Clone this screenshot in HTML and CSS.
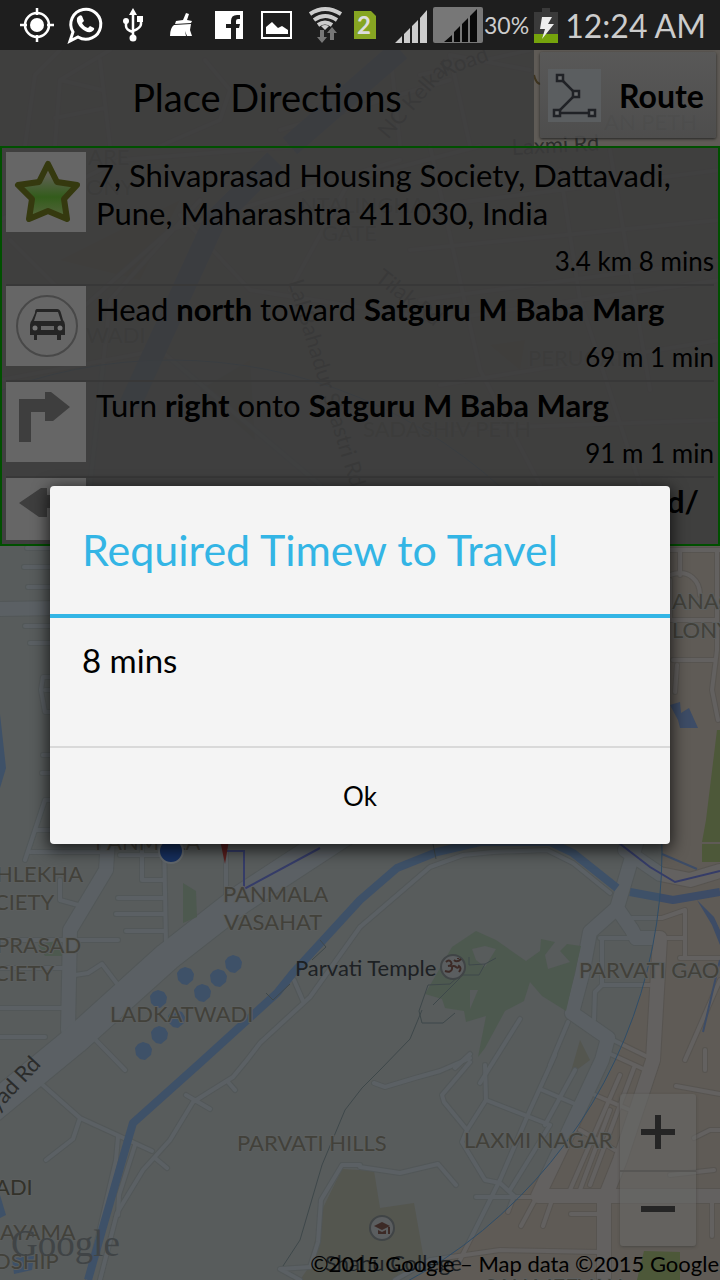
FILE: index.html
```html
<!DOCTYPE html>
<html lang="en">
<head>
<meta charset="utf-8">
<meta name="viewport" content="width=device-width, initial-scale=1">
<title>Place Directions</title>
<link rel="stylesheet" href="styles.css">
</head>
<body>
<div class="screen">
  <svg class="map" viewBox="0 0 720 1280" preserveAspectRatio="xMidYMid slice" aria-hidden="true">
    <defs>
      <g id="wide">
        <path d="M-20 1118L75 1040 167 957 240 900 350 828"/>
      </g>
      <g id="main">
        <path d="M640 830L617 908 590 932 582 975 572 1013 608 1038 602 1060 560 1150 538 1196H720M617 908L632 930 636 938H660L653 1060 620 1160 604 1200V1280M625 850L660 874 690 880 720 871M0 609L60 608"/>
        <path d="M70 930L68 1030M108 840L106 870 70 930"/>
      </g>
      <g id="minor">
        <path d="M360 927L430 867 463 855 493 852 547 850 573 863 610 893M360 927L310 997 260 1043 247 1060 233 1077 193 1102 170 1140 143 1170 117 1213 100 1280M186 1095L210 1109M228 1082L235 1090M155 1158L167 1168M294 980L303 1001"/>
        <path d="M0 940H118M0 968H68M0 1008H64M0 1037H45M75 975L88 973 102 964 118 985M60 880V900L78 905M142 840V880H164M120 855H164M118 898H164M116 914H164M126 931H164M164 840L166 945M226 850V895M30 852H108M25 860L45 800H60M35 830H60"/>
        <path d="M36 1079L80 1118 152 1151M80 1118L73 1139 46 1160M118 1137L116 1160 88 1280M135 1145L119 1195 118 1215M88 1032L125 1070"/>
        <path d="M27 548H60M24 567H60M28 587H60M25 626H60M30 643H60M60 677H43L41 690 45 712H60M43 755H60M42 773H60M45 690H60"/>
        <path d="M374 1083L385 1087 415 1078 440 1071 470 1058M555 1055L530 1110 500 1180 460 1260M485 1065L486 1100 550 1125M486 1100L467 1130 444 1102 442 1095 470 1062M467 1130L462 1142 485 1180 500 1183 514 1196M540 1089L575 1104M550 1125L510 1190M575 1070L545 1125M476 1197H535M360 1167L400 1173 438 1164 456 1185M514 1196L508 1212M535 1200L521 1226M552 1200L543 1226M571 1214H600"/>
        <path d="M602 940V985H650M600 938H632M632 918H662L685 910V958M665 938H685M602 985L595 992 594 1020M520 1019L480 1083M470 1054L455 1068M568 1022L550 1065M613 1040L650 1058M606 1052L650 1072M635 1065L590 1185M620 1075L570 1190M595 1095L630 1110M580 1130L615 1150M610 1110L580 1190M705 1070V1050M676 1086L720 1094M720 980L685 1060M670 1175L714 1170M712 1200V1236M680 958H720M694 1138L710 1130H720M395 1280L430 1260 500 1250 600 1252M300 1280L280 1269 310 1267"/>
        <path d="M670 550H720M717 550V650L712 690 718 720M680 550V575M670 575C690 568 700 582 700 595M673 660H715M677 665L675 692M670 580V620H715"/>
        <path d="M310 1267L318 1242 321 1200 342 1165H360"/>
        <path d="M25 146L35 75 60 50M55 146L60 80 110 50M110 146L100 60M60 80L102 90M55 118L105 108M160 146L220 120 230 90 205 60M400 146L390 50M470 146L450 55 530 70M280 130L450 80M420 75L530 50"/>
        <path d="M0 220L120 160 300 146M10 240L80 310 170 230 400 160M180 215L250 290 440 320 720 280M290 290L350 180 480 146M430 146L480 370 540 485M560 170L580 300 640 485M610 150L650 390M400 210L720 170M410 250L720 220M420 300L720 260M440 385L720 340M430 430L720 420M0 380L160 350 320 485M90 485L110 300 200 200"/>
      </g>
    </defs>
    <rect class="land" width="720" height="1280"/>
    <path class="estate" d="M309 1267L322 1210 342 1169 374 1171 380 1208 414 1203 424 1260 400 1280H300ZM60 260L180 200 140 280ZM200 390L250 360 255 440ZM490 345L525 340 520 370ZM580 1040L590 1060 570 1075Z"/>
    <g class="edge"><use class="w-minor" href="#minor"/><use class="w-main" href="#main"/><use class="w-wide" href="#wide"/></g>
    <g class="road"><use class="w-minor" href="#minor"/><use class="w-main" href="#main"/><use class="w-wide" href="#wide"/></g>
    <path class="park" d="M425 994L452 947 476 931 496 940 526 961 540 951 541 939 555 942 545 955 548 969 570 962 560 951 567 944 581 946 566 1011 542 996 530 982 524 1001 505 1011 485 1048 478 1057 486 1016 466 1022 464 1011 445 1008 442 999ZM183 883L196 891 197 917 183 923ZM38 945L60 940 62 956H45Z"/>
    <path class="land" d="M472 949L485 946 496 949 485 967 476 960ZM470 990L478 990 470 1009Z"/>
    <path class="lawn" d="M702 844H720V862L702 862ZM644 1251L680 1252V1280H637ZM717 730H720V842H702L706 820Z"/>
    <path class="river" d="M88 1280L103 1227 128 1140 133 1123 200 1063 277 993 293 973 360 900 397 868 437 852 480 842H550L573 853 617 888M630 892L673 900 720 892"/>
    <path class="river-wide" d="M130 405L215 220 275 160"/>
    <path class="river-wide" d="M290 146L400 50"/>
    <path class="water" d="M0 714L6 768 0 788ZM670 705L680 702 681 713 689 708 698 728 680 728 678 720ZM697 900L714 917 720 930V945L712 925ZM0 1195L6 1215 0 1218ZM12 1258L34 1256 32 1270 14 1274Z"/>
    <g class="water">
      <path id="pool" d="M185 967L191 969 194 974 193 980 187 985 182 984 178 980 177 973 180 969Z"/>
      <use href="#pool" x="33" y="2"/><use href="#pool" x="48" y="-12"/><use href="#pool" x="17" y="17"/><use href="#pool" x="-27" y="23"/><use href="#pool" x="-9" y="43"/><use href="#pool" x="-26" y="59"/><use href="#pool" x="-42" y="75"/>
    </g>
    <path class="trail" d="M469 957V965L485 964 496 958M485 964L479 975H460L450 984 428 985 419 1011 422 1023H443L455 1013M422 1010L410 1039 380 1070 362 1088 345 1110 322 1165 300 1240 283 1266M460 978L433 1005M266 993L273 1000 290 984M320 940L326 947 312 960M433 844L436 859"/>
    <path class="stream" d="M662 854L697 869M720 960L703 1032"/>
    <circle class="range" cx="171" cy="851" r="491"/>
    <path class="route" d="M227 851H244V889L320 848M615 840L650 867 675 882 720 871"/>
    <path class="brown" d="M534 75Q536 84 541 84"/>
    <g class="place">
      <text x="88" y="165">ARE</text><text x="86" y="195">ONY</text><text x="86" y="343">WADI</text>
      <text x="300" y="213">NTALINGHA</text><text x="322" y="241">GATE</text><text x="528" y="366">PERUGATE</text><text x="363" y="437">SADASHIV PETH</text>
      <text x="604" y="130">AN PETH</text>
      <text x="672" y="609">ANAG</text><text x="672" y="638">LONY</text>
      <text x="95" y="850">PANMALA</text>
      <text x="-4" y="882">HLEKHA</text><text x="-6" y="910">CIETY</text>
      <text x="-4" y="953">PRASAD</text><text x="-6" y="981">CIETY</text>
      <text x="223" y="902">PANMALA</text><text x="224" y="930">VASAHAT</text>
      <text x="110" y="1022">LADKATWADI</text>
      <text x="579" y="978">PARVATI GAON</text>
      <text x="237" y="1151">PARVATI HILLS</text><text x="464" y="1148">LAXMI NAGAR</text>
      <text class="near" x="-5" y="1195">ADI</text>
      <text x="0" y="1240">AYAMA</text><text x="-6" y="1269">DSHIP</text>
      <text x="485" y="1294">SAHAJEEVAN</text>
    </g>
    <g class="street">
      <text transform="translate(388 140) rotate(-49)">NC Kelkar</text>
      <text transform="translate(444 77) rotate(-20)">Road</text>
      <text x="512" y="155" transform="rotate(-3 512 155)">Laxmi Rd</text>
      <text transform="translate(374 280) rotate(38)">Tilak Rd</text>
      <text transform="translate(288 282) rotate(73)">Lal Bahadur Shastri Rd</text>
      <text transform="translate(-3 1113) rotate(-47)">yad Rd</text>
    </g>
    <text class="poi" x="295" y="976">Parvati Temple</text>
    <text class="poi" x="325" y="1271">Shahu College</text>
    <circle class="badge" cx="453" cy="967" r="12"/>
    <path class="om" d="M446 962q3-3 5 0t-3 4q5-1 4 3t-7 2M451 967q3-2 5 0t3-1q3 2 0 6M454 960q3 3 7-1M458 958v1"/>
    <circle class="badge" cx="382" cy="1228" r="12"/>
    <path class="cap" d="M374 1226L382 1222 390 1226 382 1230ZM378 1230L382 1232 386 1230V1234H378ZM388 1227H390V1234H388Z"/>
    <circle class="me" cx="171" cy="851" r="12"/>
    <path class="pin" d="M220 840H229L225 864Z"/>
    <text class="google" x="11" y="1256">Google</text>
  </svg>

  <div class="status">
    <svg class="tray" viewBox="0 0 380 50" role="img" aria-label="Notifications">
      <g fill="none" stroke="#fff" stroke-width="2.5">
        <circle cx="37" cy="25" r="12"/><path d="M37 8V15M37 35V42M20 25H27M47 25H54"/>
        <path stroke-width="3" d="M70 41L73 32A15 15 0 1 1 78 37Z"/>
        <path d="M133 12V38M126 22V26Q126 30 133 32M141 18V24Q141 28 133 31"/>
        <path stroke-width="2" d="M262 12H291V38H262Z"/>
      </g>
      <g fill="#fff">
        <circle cx="37" cy="25" r="7"/>
        <path d="M77 18Q80 14 82 16L84 21 82 23Q84 27 88 28L90 26 94 28Q95 30 91 32 86 33 81 28 76 23 77 18Z"/>
        <path d="M133 8L129 15H137ZM137 16H143V22H137Z"/><circle cx="126" cy="21" r="3"/><circle cx="133" cy="38" r="3.5"/>
        <path d="M186 13L189 14 187 20 192 21 191 23 175 24 176 21 183 20ZM174 25L191 24 190 30 192 36 187 36 185 31 186 36H170Q170 28 174 25Z"/>
        <path d="M215 11H243V39H215Z"/>
        <path d="M266 34V27L272 22 278 28 282 26 288 30V34Z"/>
      </g>
      <path fill="#1e1e1e" d="M231 39V28H226V24H231V21Q231 15 237 15H240V19H238Q236 19 236 21V24H240L239 28H236V39Z"/>
      <g fill="none" stroke="#ccc" stroke-width="4"><path d="M310 14Q325 4 341 14M314 20Q325 12 337 20M318 25Q325 20 332 25"/></g>
      <path fill="#ccc" d="M321 26Q325 24 329 26L325 30Z"/>
      <path fill="#777" d="M320 30H324V37H327L322 43 317 37H320ZM330 40V33H327L332 27 337 33H334V40Z"/>
      <path fill="#86a522" d="M354 11H371L376 16V39H354Z"/>
      <text class="sim" x="357" y="34">2</text>
    </svg>
    <svg class="signal" viewBox="0 0 90 50" role="img" aria-label="Signal strength">
      <path fill="#ccc" d="M1 43L8 36V43ZM10 43V34L16 28V43ZM18 43V26L24 20V43ZM26 43V18L33 10V43Z"/>
      <rect fill="#777" x="39" y="7" width="50" height="36" rx="2"/>
      <path fill="#080808" d="M50 42L58 35V42ZM60 42V32L66 26V42ZM68 42V24L74 18V42ZM76 42V16L83 9V42Z"/>
    </svg>
    <span class="percent">30%</span>
    <svg class="battery" viewBox="0 0 24 50" role="img" aria-label="Charging">
      <path fill="#3a3a3a" d="M8 8H16V12H24V34H0V12H8Z"/><path fill="#75a30c" d="M0 34H24V43H0Z"/>
      <path fill="#eee" d="M8 17H18L14 24H20L8 39 11 29H6Z"/>
    </svg>
    <span class="clock">12:24 AM</span>
  </div>

  <header class="header">
    <h1 class="title">Place Directions</h1>
    <div class="tools">
      <button class="route-button" type="button">
        <svg class="route-icon" viewBox="0 0 53 53" aria-hidden="true">
          <rect width="53" height="53" fill="#5b5e60"/>
          <g fill="none" stroke="#202226" stroke-width="2.5"><path d="M12 9L28 25 9 44H44"/><g fill="#696b6d"><path d="M9 6H15V12H9ZM25 22H31V28H25ZM6 41H12V47H6ZM41 41H47V47H41Z"/></g></g>
        </svg>
        Route
      </button>
    </div>
  </header>

  <ol class="steps">
    <li class="step">
      <svg class="step-icon" viewBox="0 0 80 80" aria-hidden="true">
        <defs><linearGradient id="leaf" x1="0" y1="0" x2="0" y2="1"><stop offset="0.2" stop-color="#5f6053"/><stop offset="0.6" stop-color="#335c1b"/><stop offset="1" stop-color="#57653f"/></linearGradient></defs>
        <path d="M42 12L51 30 71 33 58 47 61 67 42 59 23 67 26 47 12 33 33 30Z" fill="url(#leaf)" stroke="#35390f" stroke-width="6" stroke-linejoin="round"/>
      </svg>
      <div class="step-body"><p class="step-text">7, Shivaprasad Housing Society, Dattavadi, Pune, Maharashtra 411030, India</p><p class="step-meta">3.4 km 8 mins</p></div>
    </li>
    <li class="step">
      <svg class="step-icon" viewBox="0 0 80 80" aria-hidden="true">
        <circle cx="41" cy="40" r="30" fill="none" stroke="#484848" stroke-width="2"/>
        <path fill="#252525" fill-rule="evenodd" d="M31 23H51Q54 23 55 27L57 34Q59 36 59 39V49H55V54H51V49H31V54H28V49H24V39Q24 36 26 34L29 27Q29 23 31 23ZM31 26L28 35H55L52 26ZM35 40V44H48V40Z"/>
        <circle cx="29" cy="42" r="2.5" fill="#777"/><circle cx="54" cy="42" r="2.5" fill="#777"/>
      </svg>
      <div class="step-body"><p class="step-text">Head <b>north</b> toward <b>Satguru M Baba Marg</b></p><p class="step-meta">69 m 1 min</p></div>
    </li>
    <li class="step">
      <svg class="step-icon" viewBox="0 0 80 80" aria-hidden="true"><path fill="#3e3e3e" d="M13 17H39V10H45L64 25 47 39H39V30H25V60H13Z"/></svg>
      <div class="step-body"><p class="step-text">Turn <b>right</b> onto <b>Satguru M Baba Marg</b></p><p class="step-meta">91 m 1 min</p></div>
    </li>
    <li class="step">
      <svg class="step-icon" viewBox="0 0 80 80" aria-hidden="true"><path fill="#3e3e3e" d="M67 17H41V10H35L13 25 33 39H41V30H55V60H67Z"/></svg>
      <div class="step-body"><p class="step-text">Turn <b>left</b> onto the <b>Lal Bahadur Shastri Road/</b></p></div>
    </li>
  </ol>

  <div class="zoom">
    <button class="zoom-button" type="button" aria-label="Zoom in"><svg viewBox="0 0 34 34" aria-hidden="true"><path d="M14 0H20V14H34V20H20V34H14V20H0V14H14Z"/></svg></button>
    <button class="zoom-button" type="button" aria-label="Zoom out"><svg viewBox="0 0 34 34" aria-hidden="true"><path d="M0 14H34V20H0Z"/></svg></button>
  </div>
  <p class="credit">©2015 Google – Map data ©2015 Google</p>

  <div class="overlay">
    <section class="dialog" role="alertdialog" aria-labelledby="dialog-title" aria-describedby="dialog-text">
      <h2 class="dialog-title" id="dialog-title">Required Timew to Travel</h2>
      <p class="dialog-text" id="dialog-text">8 mins</p>
      <button class="dialog-button" type="button">Ok</button>
    </section>
  </div>
</div>
</body>
</html>
```
FILE: styles.css
```css
* { box-sizing: border-box; }
body, h1, h2, p, ol { margin: 0; padding: 0; }
body { font-family: Lato, "Open Sans", sans-serif; color: #000; background: #5f5b56; }
button { font: inherit; color: inherit; border: 0; padding: 0; }
.screen { position: relative; min-height: 100vh; overflow: hidden; display: flex; flex-direction: column; }

.map { position: absolute; inset: 0; width: 100%; height: 100%; }
.land { fill: #5f5b56; }
.estate { fill: #5a5344; }
.edge { fill: none; stroke: #575450; stroke-linejoin: round; stroke-linecap: round; }
.road { fill: none; stroke: #636160; stroke-linejoin: round; stroke-linecap: round; }
.edge .w-minor { stroke-width: 6px; }
.road .w-minor { stroke-width: 4px; }
.edge .w-main { stroke-width: 16px; }
.road .w-main { stroke-width: 14px; }
.edge .w-wide { stroke-width: 30px; }
.road .w-wide { stroke-width: 28px; }
.park { fill: #515745; }
.lawn { fill: #4d5839; }
.river { fill: none; stroke: #3d4c66; stroke-width: 8px; stroke-linejoin: round; }
.river-wide { fill: none; stroke: #3d4c66; stroke-width: 22px; }
.water { fill: #3d4c66; }
.stream { fill: none; stroke: #3d4c66; stroke-width: 2px; }
.trail { fill: none; stroke: #3d403e; stroke-width: 1px; }
.range { fill: rgba(67, 95, 113, 0.25); stroke: #2f4d68; stroke-width: 1px; }
.route { fill: none; stroke: #353c68; stroke-width: 2px; }
.brown { fill: none; stroke: #3f3520; stroke-width: 2px; }
.place { font-size: 22px; fill: #42413a; stroke: #5b5e5e; stroke-width: 2px; paint-order: stroke; }
.near { fill: #33322a; }
.street { font-size: 22px; fill: #2b2c2b; }
.poi { font-size: 22px; fill: #1d2124; }
.badge { fill: #5b5e60; stroke: #404446; stroke-width: 2px; }
.om { fill: none; stroke: #3c2a26; stroke-width: 2px; }
.cap { fill: #3c2a26; }
.me { fill: #17305f; stroke: #62676b; stroke-width: 2px; }
.pin { fill: #5a1f1e; }
.google { font-family: "Liberation Serif", serif; font-size: 37px; fill: #404446; }

.status { position: relative; z-index: 3; height: 50px; display: flex; align-items: center; background: #1e1e1e; color: #ccc; padding-right: 14px; }
.status svg { height: 50px; flex: none; }
.tray { width: 380px; }
.sim { font-size: 24px; font-weight: 700; fill: #ddd; }
.signal { width: 90px; margin-left: 14px; }
.percent { width: 50px; font-size: 23px; }
.battery { width: 24px; }
.clock { margin-left: auto; font-size: 32px; white-space: nowrap; }

.header { position: relative; display: flex; height: 96px; }
.title { flex: 1; display: flex; align-items: center; justify-content: center; background: rgba(59, 59, 59, 0.88); font-size: 38px; line-height: 46px; padding-bottom: 2px; font-weight: 400; }
.tools { width: 186px; padding: 2px 4px 8px 6px; }
.route-button { width: 100%; height: 86px; display: flex; align-items: center; gap: 18px; padding-left: 8px; font-size: 32px; font-weight: 700; border-radius: 2px; background: linear-gradient(rgba(88, 88, 88, 0.9), rgba(76, 76, 76, 0.9)); box-shadow: 0 1px 3px #222; }
.route-icon { width: 53px; height: 53px; flex: none; }

.steps { position: relative; height: 400px; overflow: clip; overflow-clip-margin: content-box; border: 2px solid #005000; list-style: none; background: rgba(59, 59, 59, 0.88); padding: 4px; }
.step { display: flex; gap: 10px; }
.step + .step { border-top: 2px solid #383838; }
.step-icon { width: 80px; height: 80px; flex: none; background: #666; }
.step-body { flex: 1; min-width: 0; padding: 4px 0 7px; }
.step-text { font-size: 31px; line-height: 38px; }
.step-meta { margin-top: 13px; font-size: 26px; line-height: 32px; text-align: right; }

.zoom { position: absolute; right: 24px; bottom: 34px; width: 76px; border-radius: 3px; overflow: hidden; background: rgba(104, 104, 102, 0.6); box-shadow: 0 1px 3px #4a4845; }
.zoom-button { display: flex; align-items: center; justify-content: center; width: 100%; height: 76px; background: transparent; }
.zoom-button + .zoom-button { border-top: 2px solid #575654; }
.zoom-button svg { width: 34px; fill: #252525; }
.credit { position: absolute; right: 1px; bottom: 2px; font-size: 22px; line-height: 28px; }

.overlay { position: absolute; inset: 50px 0 0; z-index: 2; display: flex; align-items: center; padding: 0 50px; }
.dialog { width: 100%; border-radius: 4px; overflow: hidden; background: #f4f4f4; box-shadow: 0 4px 16px 2px rgba(0, 0, 0, 0.7); }
.dialog-title { padding: 0 32px; font-size: 43px; font-weight: 400; line-height: 128px; color: #33b5e5; border-bottom: 4px solid #33b5e5; }
.dialog-text { padding: 22px 32px 66px; font-size: 33px; line-height: 40px; }
.dialog-button { display: block; width: 100%; height: 98px; font-size: 26px; background: transparent; border-top: 2px solid #d9d9d9; }
```
